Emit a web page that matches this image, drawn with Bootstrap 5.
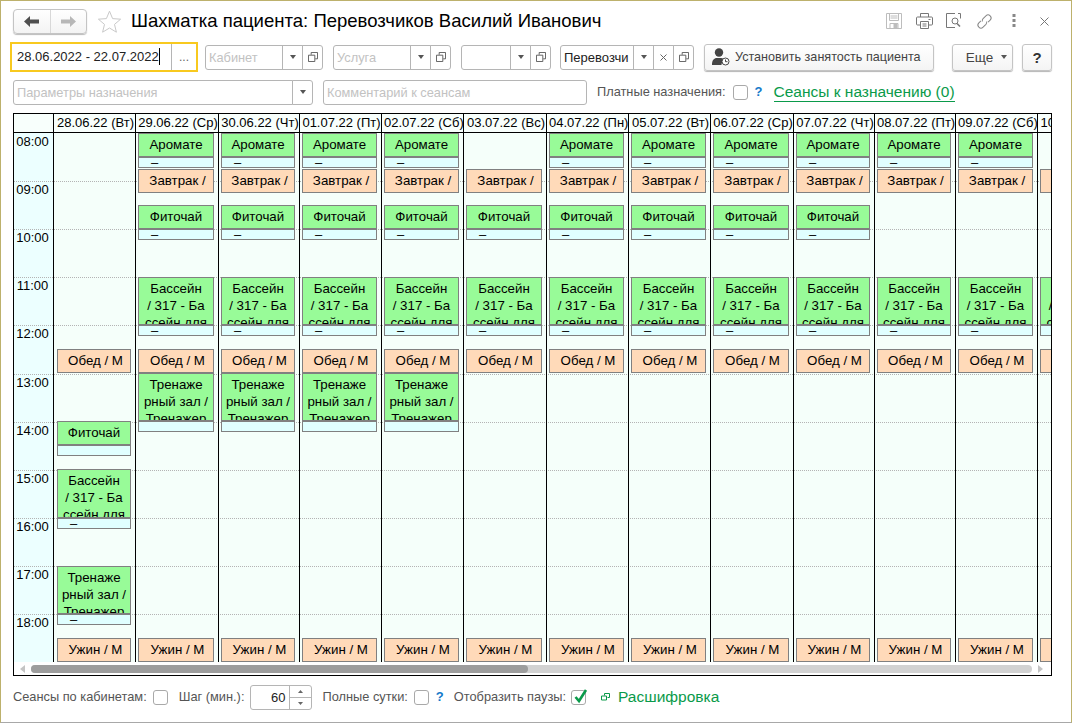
<!DOCTYPE html>
<html lang="ru">
<head>
<meta charset="utf-8">
<title>Шахматка пациента</title>
<link href="https://cdn.jsdelivr.net/npm/bootstrap@5.3.0/dist/css/bootstrap.min.css" rel="stylesheet">
<style>
html,body{margin:0;height:723px;overflow:hidden;background:#fff}
body{font:13px/16px "Liberation Sans",Arial,sans-serif;color:#000}
.win{width:1072px;height:723px;border:1px solid #bdb16c;border-bottom-color:#a8a8a8;background:#fff;overflow:hidden}
.rw-title{height:40px;padding-left:12px;padding-right:12px}
.nav-pair{width:74px;height:25px;border:1px solid #c4c4c4;border-radius:4px;background:linear-gradient(#fff,#f3f3f3);box-shadow:0 1px 1px #bbb}
.nav-pair>span{flex:1;height:100%}
.nav-pair>span+span{border-left:1px solid #d8d8d8}
.star-ic{margin-left:11px;margin-right:10px}
.ttl{font-size:18.55px;line-height:24px;font-weight:400;margin:0;color:#000;white-space:nowrap}
.tb-ic{width:30px;height:20px}
.rw-tools{height:32px;padding-left:9px}
.rw-param{height:26px;margin-top:6px;padding-left:12px}
.fld{flex-wrap:nowrap;height:25px;flex:none}
.fld .form-control{height:25px;min-height:0;padding:0 3px;border:1px solid #b5b5b5;border-radius:3px 0 0 3px;font-size:12.8px;line-height:23px;color:#c2c2c2;white-space:nowrap;overflow:hidden;background:#fff;box-shadow:none}
.fld .form-control.val{color:#222;font-size:13px}
.fld .btn{height:25px;padding:0;border:1px solid #b5b5b5;border-radius:0;background:#fff;display:flex;align-items:center;justify-content:center;flex:none;line-height:1;font-size:12px;color:#777}
.fld .btn:last-child{border-radius:0 3px 3px 0}
.fw-a{width:118px}.fw-c{width:90px}.fw-p{width:134px}.fw-d{width:300px}
.fw-k{width:264px}
.fw-k .form-control{border-radius:3px}
.b-dd{width:21px}.b-pop{width:21px}
.w-date{width:188px;height:30px;border:2px solid #f8c91f;flex:none;margin-right:7px;background:#fff}
.w-date .dtxt{flex:1;padding-left:5px;font-size:13px;line-height:26px;color:#222;white-space:nowrap;border-right:1px solid #b5b5b5}
.w-date .dtxt i{display:inline-block;width:1px;height:17px;background:#000;vertical-align:-4px}
.w-date .dots{width:24px;text-align:center;color:#666;font-size:12px;line-height:26px}
.gap-10{margin-right:10px}.gap-9{margin-right:9px}
.btn-1c{height:27px;padding:0;border:1px solid #c4c4c4;border-radius:3px;background:linear-gradient(#fff,#f4f4f4);box-shadow:0 1px 1px #b5b5b5;color:#444;font-size:12.8px;line-height:25px;display:flex;align-items:center;justify-content:center;flex:none}
.btn-1c:hover{background:#fff;border-color:#c4c4c4;color:#444}
.b-set{width:230px;margin-right:18px;gap:5px;justify-content:flex-start;padding-left:7px;font-size:12.600px}
.b-more{width:61px;margin-right:9px;gap:8px;font-size:13.500px;padding-left:8px}
.b-q{width:30px;font-weight:700;font-size:15px;color:#333}
.lbl{color:#555;white-space:nowrap;font-size:12.8px}
.chk{width:15px;height:15px;border:1px solid #a9a9a9;border-radius:3px;background:#fff;display:block;flex:none;position:relative}
.qm{color:#1479c9;font-weight:700;font-size:13px}
.lnk-g{color:#0a9a4a;font-size:15.500px;line-height:18px;white-space:nowrap}
.lnk-u{border-bottom:1px solid #0a9a4a;text-decoration:none}
.sched{margin:8px 0 0 12px;width:1039px;height:563px;border:1px solid #000;background:#fff;overflow:hidden}
.cols-def{display:grid;grid-template-columns:39px 82px 83px 81px 82px 82px 83px 82px 82px 83px 81px 81px 82px 82px}
.hd{height:19px;background:#f8fffc;border-bottom:1px solid #000;margin-bottom:0}
.hd>div{border-left:1px solid #000;text-align:center;white-space:nowrap;overflow:hidden;line-height:16px;padding-top:1px;padding-left:2px}
.hd>div:first-child{border-left:0}
.sbody{height:529px;position:relative;overflow:hidden;background:linear-gradient(to right,#ecffff 39px,#f5fffa 39px)}
.hlines{position:absolute;inset:1px 0 0 0;display:grid;grid-template-rows:repeat(11,48.12px)}
.hlines div{border-bottom:1px dotted #b4b4b4}
.sgrid{position:relative;height:100%}
.tcol{display:grid;grid-template-rows:repeat(11,48.12px);text-align:center}
.tcol div{padding-top:1px;padding-right:2px}
.dcol{border-left:1px solid #000;display:grid;grid-template-rows:repeat(44,12.03px);grid-template-columns:minmax(0,1fr)}
.ev{margin:0 4px 0 2px;border:1px solid #808080;text-align:center;overflow:hidden;white-space:nowrap;padding-top:2px;line-height:17px;color:#000;font-size:13.300px}
.g{background:#98fb98}.p{background:#ffdab9;padding-left:3px}
.sb{margin:0 4px 0 2px;border:1px solid #808080;background:#e0ffff;height:11px;align-self:start;line-height:10px;padding-left:12px;overflow:hidden;color:#000}
.dcol-a .ev,.dcol-a .sb{margin-left:3px}
.r-ar{grid-row:1/3}.r-ar2{grid-row:3}.r-za{grid-row:4/6}.r-fi{grid-row:7/9}.r-fi2{grid-row:9}
.r-ba{grid-row:13/17}.r-ba2{grid-row:17}.r-ob{grid-row:19/21}.r-tr{grid-row:21/25}.r-tr2{grid-row:25}.r-uz{grid-row:43/45}
.r-fl{grid-row:25/27}.r-fl2{grid-row:27}.r-bl{grid-row:29/33}.r-bl2{grid-row:33}.r-tl{grid-row:37/41}.r-tl2{grid-row:41}
.sbar{height:13px;padding:0 2px 0 0;background:#fff}
.sarr{width:17px;text-align:center}
.strack{flex:1;height:8px;border-radius:4px;background:#d2d2d2}
.sthumb{width:497px;height:8px;border-radius:4px;background:#9d9d9d}
.foot{height:42px;padding-left:12px}
.spin-f{width:62px;height:25px;border:1px solid #b5b5b5;border-radius:3px;flex:none;margin-left:6px;margin-right:10px}
.spin-f .v{flex:1;text-align:right;padding-right:4px;line-height:23px;color:#222}
.spin-f .s{width:22px;border-left:1px solid #b5b5b5}
.spin-f .s span{flex:1;border-bottom:1px solid #b5b5b5}
.spin-f .s span:last-child{border-bottom:0}
.mr-5x{margin-right:5px}.mr-6x{margin-right:6px}.mr-7{margin-right:7px}.mr-11{margin-right:11px}.mr-15{margin-right:15px}.mr-8{margin-right:8px}
.chk svg{position:absolute;left:1px;top:-3px}
</style>
</head>
<body>
<svg width="0" height="0" class="d-block">
<defs>
<symbol id="pop" viewBox="0 0 11 11"><path d="M3.500 3V.5h7v7H8M.5 3.500h7v7h-7z" fill="#fff" stroke="#555"/></symbol>
<symbol id="cr" viewBox="0 0 6 4"><path d="M0 0h6L3 4z" fill="#555"/></symbol>
</defs>
</svg>
<div class="win d-flex flex-column">
  <div class="rw-title d-flex align-items-center">
    <div class="nav-pair d-flex align-items-center">
      <span class="d-flex align-items-center justify-content-center"><svg width="15" height="11" viewBox="0 0 15 11"><path d="M0 5.500 6 0v3.500h9v4H6V11z" fill="#4f4f4f"/></svg></span>
      <span class="d-flex align-items-center justify-content-center"><svg width="15" height="11" viewBox="0 0 15 11"><path d="M15 5.500 9 0v3.500H0v4h9V11z" fill="#b7b7b7"/></svg></span>
    </div>
    <svg class="star-ic" width="23" height="23" viewBox="0 0 23 23"><path d="M11.500 1.200 14.600 8.600l8 .6-6.100 5.200 1.900 7.800-6.900-4.200-6.900 4.200 1.900-7.800L.4 9.200l8-.6z" fill="#fff" stroke="#c9c9c9"/></svg>
    <h1 class="ttl">Шахматка пациента: Перевозчиков Василий Иванович</h1>
    <div class="ms-auto d-flex align-items-center">
      <span class="tb-ic d-flex align-items-center justify-content-center"><svg width="16" height="16" viewBox="0 0 16 16" fill="none" stroke="#bdbdbd"><path d="M.5.500h15v15H.5zM3.500.5v7h9v-7M4.500 3h7M4.500 5h7M4 15.500v-5h8v5"/><path d="M8 11h3v4H8z" fill="#bdbdbd"/></svg></span>
      <span class="tb-ic d-flex align-items-center justify-content-center"><svg width="17" height="16" viewBox="0 0 17 16" fill="none" stroke="#777"><path d="M4.500 4V.5h8V4M4 12H1.500a1 1 0 0 1-1-1V5a1 1 0 0 1 1-1h14a1 1 0 0 1 1 1v6a1 1 0 0 1-1 1H13M4.500 8.500h8v7h-8zM6.500 11h4M6.500 13h4M12.500 6.500h2"/></svg></span>
      <span class="tb-ic d-flex align-items-center justify-content-center"><svg width="16" height="16" viewBox="0 0 16 16" fill="none" stroke="#777"><path d="M9 .5H.5v14H9M12 .5h2.500v5"/><circle cx="9" cy="8" r="3"/><path d="m11 10.500 3 3" stroke-width="1.600"/></svg></span>
      <span class="tb-ic d-flex align-items-center justify-content-center"><svg width="17" height="17" viewBox="0 0 17 17" fill="none" stroke="#888"><g transform="rotate(-45 8.500 8.500)"><path d="M6.500 5.500H3.500a3 3 0 0 0 0 6h4a3 3 0 0 0 2.500-1.500"/><path d="M10.500 11.500h3a3 3 0 0 0 0-6h-4A3 3 0 0 0 7 7"/></g></svg></span>
      <span class="tb-ic d-flex align-items-center justify-content-center"><svg width="4" height="14" viewBox="0 0 4 14" fill="#888"><rect x=".5" y="0" width="3" height="3"/><rect x=".5" y="5" width="3" height="3"/><rect x=".5" y="10" width="3" height="3"/></svg></span>
      <span class="tb-ic d-flex align-items-center justify-content-center"><svg width="9" height="9" viewBox="0 0 9 9" stroke="#777"><path d="m.5.500 8 8M8.500.500l-8 8"/></svg></span>
    </div>
  </div>
  <div class="rw-tools d-flex align-items-center">
    <div class="w-date d-flex"><div class="dtxt">28.06.2022 - 22.07.2022<i></i></div><div class="dots">...</div></div>
    <div class="input-group fld fw-a gap-10"><span class="form-control">Кабинет</span><button type="button" class="btn b-dd"><svg width="6" height="4"><use href="#cr"/></svg></button><button type="button" class="btn b-pop"><svg width="10" height="10"><use href="#pop"/></svg></button></div>
    <div class="input-group fld fw-a gap-10"><span class="form-control">Услуга</span><button type="button" class="btn b-dd"><svg width="6" height="4"><use href="#cr"/></svg></button><button type="button" class="btn b-pop"><svg width="10" height="10"><use href="#pop"/></svg></button></div>
    <div class="input-group fld fw-c gap-9"><span class="form-control"></span><button type="button" class="btn b-dd"><svg width="6" height="4"><use href="#cr"/></svg></button><button type="button" class="btn b-pop"><svg width="10" height="10"><use href="#pop"/></svg></button></div>
    <div class="input-group fld fw-p gap-10"><span class="form-control val">Перевозчи</span><button type="button" class="btn b-dd"><svg width="6" height="4"><use href="#cr"/></svg></button><button type="button" class="btn b-dd"><svg width="7" height="7" viewBox="0 0 7 7" stroke="#666"><path d="m.5.500 6 6M6.500.500l-6 6"/></svg></button><button type="button" class="btn b-pop"><svg width="10" height="10"><use href="#pop"/></svg></button></div>
    <button type="button" class="btn btn-1c b-set"><svg width="18" height="18" viewBox="0 0 18 18"><circle cx="7" cy="4.500" r="4.200" fill="#444"/><path d="M0 17c0-5 2-7 5-7h4c2 0 3 1 3.500 2.500A5 5 0 0 0 9.500 17z" fill="#444"/><circle cx="13.500" cy="13.500" r="3.500" fill="#fff" stroke="#444"/><path d="M13.500 11.500v2.200h2" fill="none" stroke="#444"/></svg>Установить занятость пациента</button>
    <button type="button" class="btn btn-1c b-more">Еще <svg width="6" height="4"><use href="#cr"/></svg></button>
    <button type="button" class="btn btn-1c b-q">?</button>
  </div>
  <div class="rw-param d-flex align-items-center">
    <div class="input-group fld fw-d gap-10"><span class="form-control">Параметры назначения</span><button type="button" class="btn b-dd"><svg width="6" height="4"><use href="#cr"/></svg></button></div>
    <div class="input-group fld fw-k gap-10"><span class="form-control">Комментарий к сеансам</span></div>
    <span class="lbl mr-7">Платные назначения:</span><span class="chk mr-7"></span><span class="qm mr-11">?</span>
    <a href="#" class="lnk-g lnk-u">Сеансы к назначению (0)</a>
  </div>
  <div class="sched">
    <div class="cols-def hd">
      <div></div><div>28.06.22 (Вт)</div><div>29.06.22 (Ср)</div><div>30.06.22 (Чт)</div><div>01.07.22 (Пт)</div><div>02.07.22 (Сб)</div><div>03.07.22 (Вс)</div><div>04.07.22 (Пн)</div><div>05.07.22 (Вт)</div><div>06.07.22 (Ср)</div><div>07.07.22 (Чт)</div><div>08.07.22 (Пт)</div><div>09.07.22 (Сб)</div><div>10.07.22 (Вс)</div>
    </div>
    <div class="sbody">
      <div class="hlines"><div></div><div></div><div></div><div></div><div></div><div></div><div></div><div></div><div></div><div></div><div></div></div>
      <div class="sgrid cols-def">
        <div class="tcol"><div>08:00</div><div>09:00</div><div>10:00</div><div>11:00</div><div>12:00</div><div>13:00</div><div>14:00</div><div>15:00</div><div>16:00</div><div>17:00</div><div>18:00</div></div>
        <div class="dcol dcol-a">
          <div class="ev p r-ob">Обед / М</div>
          <div class="ev g r-fl">Фиточай</div><div class="sb r-fl2"></div>
          <div class="ev g r-bl">Бассейн<br>/ 317 - Ба<br>ссейн для</div><div class="sb r-bl2">–</div>
          <div class="ev g r-tl">Тренаже<br>рный зал /<br>Тренажер</div><div class="sb r-tl2">–</div>
          <div class="ev p r-uz">Ужин / М</div>
        </div>
        <div class="dcol">
          <div class="ev g r-ar">Аромате</div><div class="sb r-ar2">–</div><div class="ev p r-za">Завтрак /</div><div class="ev g r-fi">Фиточай</div><div class="sb r-fi2">–</div>
          <div class="ev g r-ba">Бассейн<br>/ 317 - Ба<br>ссейн для</div><div class="sb r-ba2">–</div><div class="ev p r-ob">Обед / М</div>
          <div class="ev g r-tr">Тренаже<br>рный зал /<br>Тренажер</div><div class="sb r-tr2"></div><div class="ev p r-uz">Ужин / М</div>
        </div>
        <div class="dcol">
          <div class="ev g r-ar">Аромате</div><div class="sb r-ar2">–</div><div class="ev p r-za">Завтрак /</div><div class="ev g r-fi">Фиточай</div><div class="sb r-fi2">–</div>
          <div class="ev g r-ba">Бассейн<br>/ 317 - Ба<br>ссейн для</div><div class="sb r-ba2">–</div><div class="ev p r-ob">Обед / М</div>
          <div class="ev g r-tr">Тренаже<br>рный зал /<br>Тренажер</div><div class="sb r-tr2"></div><div class="ev p r-uz">Ужин / М</div>
        </div>
        <div class="dcol">
          <div class="ev g r-ar">Аромате</div><div class="sb r-ar2">–</div><div class="ev p r-za">Завтрак /</div><div class="ev g r-fi">Фиточай</div><div class="sb r-fi2">–</div>
          <div class="ev g r-ba">Бассейн<br>/ 317 - Ба<br>ссейн для</div><div class="sb r-ba2">–</div><div class="ev p r-ob">Обед / М</div>
          <div class="ev g r-tr">Тренаже<br>рный зал /<br>Тренажер</div><div class="sb r-tr2"></div><div class="ev p r-uz">Ужин / М</div>
        </div>
        <div class="dcol">
          <div class="ev g r-ar">Аромате</div><div class="sb r-ar2">–</div><div class="ev p r-za">Завтрак /</div><div class="ev g r-fi">Фиточай</div><div class="sb r-fi2">–</div>
          <div class="ev g r-ba">Бассейн<br>/ 317 - Ба<br>ссейн для</div><div class="sb r-ba2">–</div><div class="ev p r-ob">Обед / М</div>
          <div class="ev g r-tr">Тренаже<br>рный зал /<br>Тренажер</div><div class="sb r-tr2"></div><div class="ev p r-uz">Ужин / М</div>
        </div>
        <div class="dcol">
          <div class="ev p r-za">Завтрак /</div><div class="ev g r-fi">Фиточай</div><div class="sb r-fi2">–</div>
          <div class="ev g r-ba">Бассейн<br>/ 317 - Ба<br>ссейн для</div><div class="sb r-ba2">–</div><div class="ev p r-ob">Обед / М</div><div class="ev p r-uz">Ужин / М</div>
        </div>
        <div class="dcol">
          <div class="ev g r-ar">Аромате</div><div class="sb r-ar2">–</div><div class="ev p r-za">Завтрак /</div><div class="ev g r-fi">Фиточай</div><div class="sb r-fi2">–</div>
          <div class="ev g r-ba">Бассейн<br>/ 317 - Ба<br>ссейн для</div><div class="sb r-ba2">–</div><div class="ev p r-ob">Обед / М</div><div class="ev p r-uz">Ужин / М</div>
        </div>
        <div class="dcol">
          <div class="ev g r-ar">Аромате</div><div class="sb r-ar2">–</div><div class="ev p r-za">Завтрак /</div><div class="ev g r-fi">Фиточай</div><div class="sb r-fi2">–</div>
          <div class="ev g r-ba">Бассейн<br>/ 317 - Ба<br>ссейн для</div><div class="sb r-ba2">–</div><div class="ev p r-ob">Обед / М</div><div class="ev p r-uz">Ужин / М</div>
        </div>
        <div class="dcol">
          <div class="ev g r-ar">Аромате</div><div class="sb r-ar2">–</div><div class="ev p r-za">Завтрак /</div><div class="ev g r-fi">Фиточай</div><div class="sb r-fi2">–</div>
          <div class="ev g r-ba">Бассейн<br>/ 317 - Ба<br>ссейн для</div><div class="sb r-ba2">–</div><div class="ev p r-ob">Обед / М</div><div class="ev p r-uz">Ужин / М</div>
        </div>
        <div class="dcol">
          <div class="ev g r-ar">Аромате</div><div class="sb r-ar2">–</div><div class="ev p r-za">Завтрак /</div><div class="ev g r-fi">Фиточай</div><div class="sb r-fi2">–</div>
          <div class="ev g r-ba">Бассейн<br>/ 317 - Ба<br>ссейн для</div><div class="sb r-ba2">–</div><div class="ev p r-ob">Обед / М</div><div class="ev p r-uz">Ужин / М</div>
        </div>
        <div class="dcol">
          <div class="ev g r-ar">Аромате</div><div class="sb r-ar2">–</div><div class="ev p r-za">Завтрак /</div>
          <div class="ev g r-ba">Бассейн<br>/ 317 - Ба<br>ссейн для</div><div class="sb r-ba2">–</div><div class="ev p r-ob">Обед / М</div><div class="ev p r-uz">Ужин / М</div>
        </div>
        <div class="dcol">
          <div class="ev g r-ar">Аромате</div><div class="sb r-ar2">–</div><div class="ev p r-za">Завтрак /</div>
          <div class="ev g r-ba">Бассейн<br>/ 317 - Ба<br>ссейн для</div><div class="sb r-ba2">–</div><div class="ev p r-ob">Обед / М</div><div class="ev p r-uz">Ужин / М</div>
        </div>
        <div class="dcol">
          <div class="ev p r-za">Завтрак /</div>
          <div class="ev g r-ba">Бассейн<br>/ 317 - Ба<br>ссейн для</div><div class="sb r-ba2">–</div><div class="ev p r-ob">Обед / М</div><div class="ev p r-uz">Ужин / М</div>
        </div>
      </div>
    </div>
    <div class="sbar d-flex align-items-center">
      <span class="sarr d-flex justify-content-center"><svg width="5" height="8" viewBox="0 0 5 8"><path d="M5 0v8L0 4z" fill="#c4c4c4"/></svg></span>
      <div class="strack"><div class="sthumb"></div></div>
      <span class="sarr d-flex justify-content-center"><svg width="5" height="8" viewBox="0 0 5 8"><path d="M0 0v8l5-4z" fill="#c4c4c4"/></svg></span>
    </div>
  </div>
  <div class="foot d-flex align-items-center">
    <span class="lbl mr-6x">Сеансы по кабинетам:</span><span class="chk mr-11"></span>
    <span class="lbl">Шаг (мин.):</span>
    <div class="spin-f d-flex"><span class="v">60</span><span class="s d-flex flex-column"><span class="d-flex align-items-center justify-content-center"><svg width="5" height="3" viewBox="0 0 5 3"><path d="M0 3h5L2.500 0z" fill="#666"/></svg></span><span class="d-flex align-items-center justify-content-center"><svg width="5" height="3" viewBox="0 0 5 3"><path d="M0 0h5L2.500 3z" fill="#666"/></svg></span></span></div>
    <span class="lbl mr-6x">Полные сутки:</span><span class="chk mr-7"></span><span class="qm gap-10">?</span>
    <span class="lbl mr-5x">Отобразить паузы:</span><span class="chk mr-15"><svg width="15" height="16" viewBox="0 0 15 16"><path d="M2.500 9 6 13 13 2" fill="none" stroke="#0a9a4a" stroke-width="2.600"/></svg></span>
    <svg class="mr-8" width="9" height="8" viewBox="0 0 9 8" fill="none" stroke="#0a9a4a"><path d="M3.500 2.500v-2h5v4h-2M.5 3h5v4h-5z"/></svg>
    <a href="#" class="lnk-g text-decoration-none">Расшифровка</a>
  </div>
</div>
</body>
</html>
